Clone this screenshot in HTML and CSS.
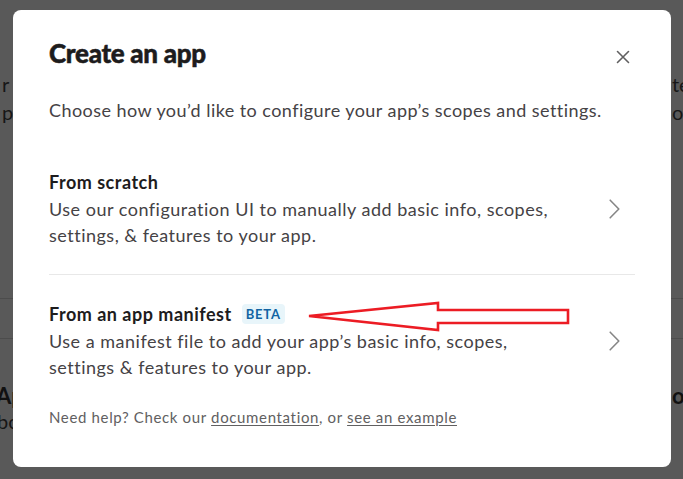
FILE: index.html
```html
<!DOCTYPE html>
<html lang="en">
<head>
<meta charset="utf-8">
<title>Create an app</title>
<link rel="stylesheet" href="styles.css">
</head>
<body>
<div class="page">
  <div class="bg-col bg-left">
    <p class="bg-text bg-top">r apps<br>p here</p>
    <div class="bg-line bg-line-a"></div>
    <div class="bg-line bg-line-b"></div>
    <p class="bg-heading">Apps</p>
    <p class="bg-text bg-small">bot</p>
  </div>
  <div class="bg-col bg-right">
    <p class="bg-text bg-top">te<br>o</p>
    <div class="bg-line bg-line-a"></div>
    <div class="bg-line bg-line-b"></div>
    <p class="bg-heading bg-heading-r">ok</p>
  </div>
</div>

<div class="overlay">
  <div class="modal" role="dialog" aria-labelledby="modal-title">
    <header class="modal-header">
      <h1 class="modal-title" id="modal-title">Create an app</h1>
      <button class="close-btn" aria-label="Close">
        <svg viewBox="0 0 14 14" width="14" height="14"><path d="M1.5 1.5l11 11M12.5 1.5l-11 11" fill="none" stroke="#616061" stroke-width="1.6" stroke-linecap="round"/></svg>
      </button>
    </header>
    <p class="modal-sub">Choose how you’d like to configure your app’s scopes and settings.</p>
    <ul class="options">
      <li class="option">
        <div class="option-text">
          <div class="option-title">From scratch</div>
          <div class="option-desc">Use our configuration UI to manually add basic info, scopes, settings, &amp; features to your app.</div>
        </div>
        <svg class="chev" viewBox="0 0 11 20" width="11" height="20"><path d="M1.2 1.2l8.6 8.8-8.6 8.8" fill="none" stroke="#868686" stroke-width="1.6" stroke-linecap="round" stroke-linejoin="round"/></svg>
      </li>
      <li class="option">
        <div class="option-text">
          <div class="option-title">From an app manifest <span class="badge">BETA</span></div>
          <div class="option-desc">Use a manifest file to add your app’s basic info, scopes, settings &amp; features to your app.</div>
        </div>
        <svg class="chev" viewBox="0 0 11 20" width="11" height="20"><path d="M1.2 1.2l8.6 8.8-8.6 8.8" fill="none" stroke="#868686" stroke-width="1.6" stroke-linecap="round" stroke-linejoin="round"/></svg>
      </li>
    </ul>
    <p class="help">Need help? Check our <a href="#">documentation</a>, or <a href="#">see an example</a></p>
  </div>
</div>

<svg class="annot" viewBox="0 0 683 479" width="683" height="479" aria-hidden="true">
  <polygon points="309,316 438,303 438,310 568,310 568,323 438,323 438,330" fill="none" stroke="#ec1c24" stroke-width="2.6" stroke-linejoin="miter"/>
</svg>
</body>
</html>
```

FILE: styles.css
```css
* { box-sizing: border-box; }
html, body { margin: 0; padding: 0; }
body {
  width: 683px;
  height: 479px;
  overflow: hidden;
  background: #595959;
  font-family: Lato, "Open Sans", sans-serif;
  position: relative;
}

/* dimmed page behind the dialog */
.page {
  display: flex;
  justify-content: space-between;
  height: 479px;
}
.bg-col {
  width: 13px;
  overflow: hidden;
  white-space: nowrap;
}
.bg-left { padding-left: 2px; }
.bg-right { width: 12px; padding-left: 1px; }
.bg-text {
  margin: 0;
  color: #161616;
  font-size: 20px;
  line-height: 28px;
}
.bg-top { margin-top: 70px; }
.bg-line {
  height: 1px;
  background: #4c4c4c;
  margin-left: -4px;
}
.bg-line-a { margin-top: 172px; }
.bg-line-b { margin-top: 39px; }
.bg-heading {
  margin: 43px 0 0 -6px;
  color: #111;
  font-size: 22px;
  font-weight: 700;
  line-height: 28px;
}
.bg-heading-r { margin-left: 0; }
.bg-small { margin: -2px 0 0 -5px; line-height: 26px; }

/* dialog */
.overlay {
  position: absolute;
  inset: 0;
  padding: 10px 0 0 13px;
}
.modal {
  width: 658px;
  height: 457px;
  background: #fff;
  border-radius: 8px;
  padding: 25px 36px 0 36px;
  display: flex;
  flex-direction: column;
}
.modal-header {
  display: flex;
  align-items: flex-start;
  justify-content: space-between;
}
.modal-title {
  margin: 0;
  font-size: 26px;
  line-height: 36px;
  font-weight: 900;
  color: #1d1c1d;
  letter-spacing: -0.3px;
  -webkit-text-stroke: 0.5px #1d1c1d;
}
.close-btn {
  width: 24px;
  height: 24px;
  margin-top: 10px;
  padding: 0;
  border: 0;
  background: none;
  display: flex;
  align-items: center;
  justify-content: center;
}
.modal-sub {
  margin: 26px 0 0;
  font-size: 18px;
  line-height: 26px;
  letter-spacing: 0.45px;
  color: #454245;
}
.options {
  list-style: none;
  margin: 20px 0 0;
  padding: 0;
}
.option {
  display: flex;
  align-items: center;
  gap: 24px;
  padding: 26px 15px 26px 0;
}
.option + .option { border-top: 1px solid #e8e8e8; }
.option-text { flex: 1; max-width: 520px; }
.option-title {
  font-size: 18px;
  line-height: 26px;
  font-weight: 700;
  letter-spacing: 0.5px;
  color: #1d1c1d;
  display: flex;
  align-items: center;
}
.badge {
  margin-left: 10px;
  background: #e8f5fa;
  color: #1264a3;
  font-size: 13px;
  font-weight: 700;
  line-height: 20px;
  letter-spacing: 0.8px;
  padding: 0 4px;
  border-radius: 4px;
}
.option-desc {
  margin-top: 1px;
  font-size: 18px;
  line-height: 26px;
  letter-spacing: 0.5px;
  color: #454245;
}
.chev { flex: none; margin-left: auto; }
.help {
  margin: 0;
  font-size: 15px;
  line-height: 22px;
  letter-spacing: 0.65px;
  color: #616061;
}
.help a {
  color: #616061;
  text-decoration: underline;
  text-underline-offset: 2px;
}

/* red annotation arrow drawn over the dialog */
.annot {
  position: absolute;
  left: 0;
  top: 0;
  pointer-events: none;
}
```
